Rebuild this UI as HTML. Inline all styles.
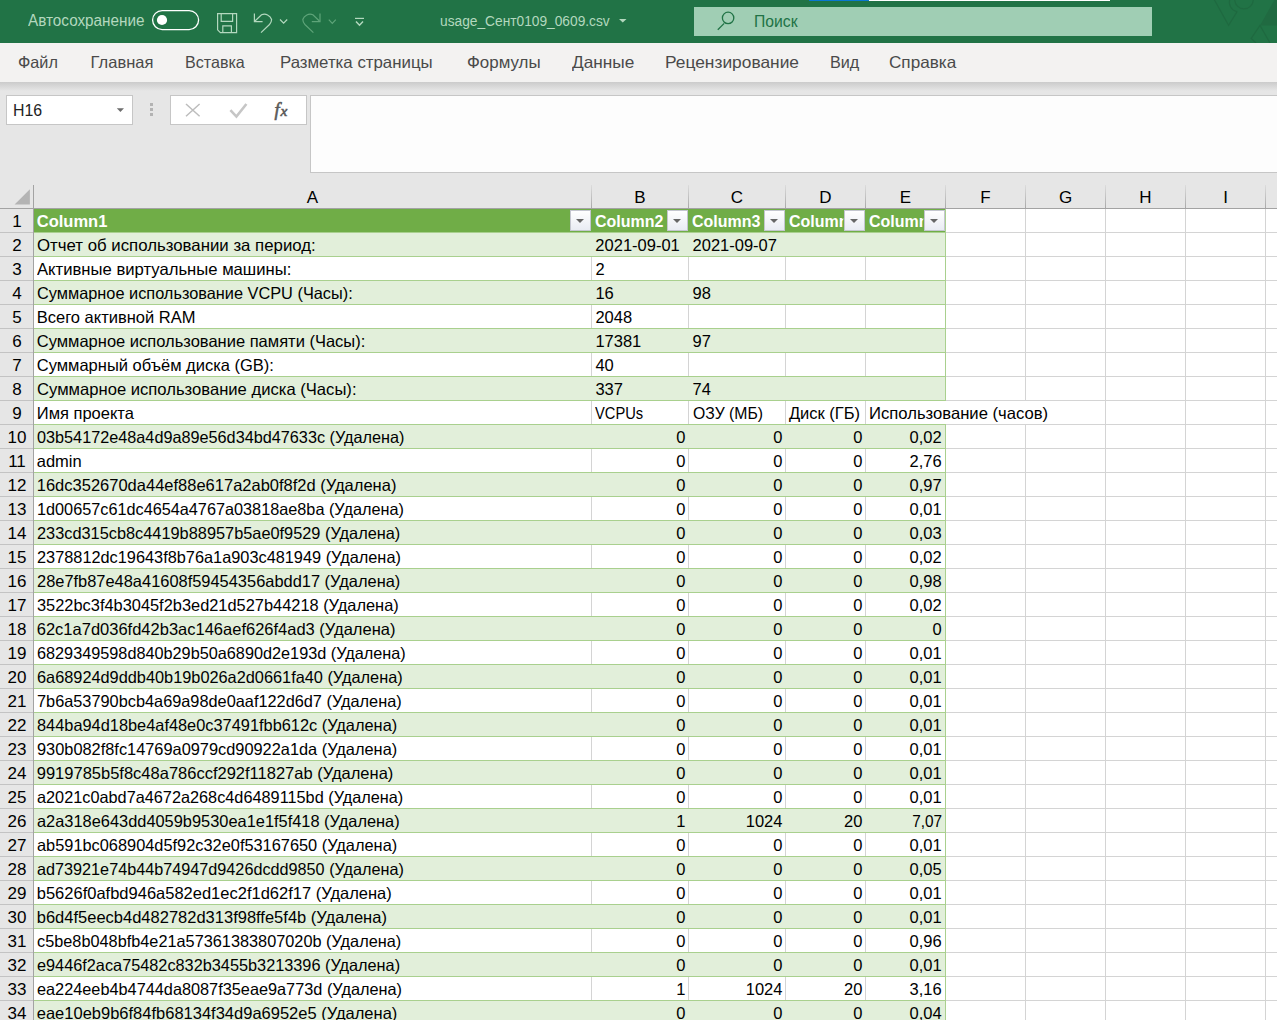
<!DOCTYPE html>
<html><head><meta charset="utf-8"><title>Excel</title>
<style>
html,body{margin:0;padding:0;width:1277px;height:1020px;overflow:hidden;background:#fff;font-family:'Liberation Sans',sans-serif;}
#root{position:relative;width:1277px;height:1020px;overflow:hidden;}
#root div{position:absolute;}
#root svg{position:absolute;}
.t{white-space:pre;line-height:1;}
.btn{top:210px;width:19px;height:19px;border:1px solid #c4c6cf;background:linear-gradient(#ffffff,#e9ecf3);}
.btn i{position:absolute;left:5px;top:8px;width:0;height:0;border-left:4px solid transparent;border-right:4px solid transparent;border-top:4px solid #666;}
</style></head>
<body><div id="root">
<!-- title bar -->
<div style="left:0;top:0;width:1277px;height:43px;background:#217346"></div>
<div style="left:809px;top:0;width:60px;height:1px;background:#0a78d2"></div>
<div style="left:869px;top:0;width:241px;height:1px;background:#ffffff"></div>
<svg style="left:1180px;top:0" width="97" height="43" viewBox="1180 0 97 43">
 <g fill="none" stroke="#1f6940" stroke-width="1.2" opacity="0.9">
  <polyline points="1213.9,-1 1228.6,25.4 1237.1,11.6"/>
  <path d="M1237.1,11.6 A9.5,9.5 0 0 1 1230,-1"/>
  <circle cx="1244" cy="-0.5" r="9.3"/>
  <polyline points="1255.9,43 1251.2,38.5 1260,25.4 1270,43"/>
 </g>
 <polygon points="1260,25.4 1275,-1 1278,-1 1278,25.4" fill="#206a41"/>
</svg>
<svg style="left:0;top:0" width="400" height="43" viewBox="0 0 400 43">
 <rect x="152.6" y="10.6" width="46" height="19" rx="9.5" ry="9.5" fill="none" stroke="#ffffff" stroke-width="1.3"/>
 <circle cx="162" cy="20" r="5.1" fill="#ffffff"/>
 <g fill="none" stroke="#b3d8be" stroke-width="1.2">
  <path d="M217.6,13.6 H236.6 V32.6 H220.4 L217.6,29.8 Z"/>
  <path d="M221.2,13.6 V21.4 H232.6 V13.6"/>
  <path d="M222.8,32.6 V25.8 H231.4 V32.6"/>
  <path d="M254.4,13.5 V21.6 H262.6"/>
  <path d="M255,21 L261.5,14.8 A7.6,7.6 0 0 1 271.6,19.5 A7.6,7.6 0 0 1 269.5,24.5 L261,32.6"/>
  <path d="M280,19.5 L283.6,23.2 L287.2,19.5"/>
  <path d="M355,18.4 H364"/>
  <path d="M356,21.5 L359.5,25.2 L363,21.5" stroke-width="1.5"/>
 </g>
 <g fill="none" stroke="#5ea479" stroke-width="1.2">
  <path d="M320,13.5 V21.6 H311.8"/>
  <path d="M319.4,21 L312.9,14.8 A7.6,7.6 0 0 0 302.8,19.5 A7.6,7.6 0 0 0 304.9,24.5 L313.4,32.6"/>
  <path d="M328.8,19.6 L332.3,23.3 L335.8,19.6"/>
 </g>
</svg>
<svg style="left:600px;top:0" width="40" height="43" viewBox="600 0 40 43">
 <polygon points="619,19 626.5,19 622.75,22.6" fill="#b3d8be"/>
</svg>
<div style="left:694px;top:7px;width:458px;height:29px;background:#a0ceb4"></div>
<svg style="left:710px;top:5px" width="30" height="30" viewBox="710 5 30 30">
 <g fill="none" stroke="#217346" stroke-width="1.3"><circle cx="728.1" cy="17.9" r="5.7"/><path d="M717.8,29.8 L724.2,23.4"/></g>
</svg>
<!-- ribbon tabs -->
<div style="left:0;top:43px;width:1277px;height:39px;background:#f3f2f1"></div>
<!-- formula area -->
<div style="left:0;top:82px;width:1277px;height:126px;background:#e6e6e6"></div>
<div style="left:0;top:82px;width:1277px;height:9px;background:linear-gradient(#cbcbcb,#e6e6e6)"></div>
<div style="left:6px;top:95px;width:125px;height:28px;border:1px solid #c6c6c6;background:#fff"></div>
<svg style="left:110px;top:100px" width="20" height="20" viewBox="110 100 20 20"><polygon points="116.8,108.2 124,108.2 120.4,112" fill="#6d6d6d"/></svg>
<div style="left:150px;top:103px;width:3px;height:3px;background:#b3b3b3"></div>
<div style="left:150px;top:108px;width:3px;height:3px;background:#b3b3b3"></div>
<div style="left:150px;top:113px;width:3px;height:3px;background:#b3b3b3"></div>
<div style="left:170px;top:95px;width:135px;height:28px;border:1px solid #c6c6c6;background:#fff"></div>
<svg style="left:170px;top:95px" width="137" height="30" viewBox="170 95 137 30">
 <g stroke="#bdbdbd" stroke-width="1.5" fill="none"><path d="M186,104 L199.6,116.2 M199.6,104 L186,116.2"/></g>
 <path d="M230.4,110.2 L236.4,116.6 L246.4,104" stroke="#c6c6c6" stroke-width="2.6" fill="none"/>
 <text x="274.5" y="115.8" font-family="Liberation Serif" font-style="italic" font-size="18.5" fill="#5a5a5a" stroke="#5a5a5a" stroke-width="0.6">f</text>
 <text x="280.5" y="115.8" font-family="Liberation Serif" font-style="italic" font-size="15.5" fill="#5a5a5a" stroke="#5a5a5a" stroke-width="0.6">x</text>
</svg>
<div style="left:310px;top:95px;width:980px;height:76px;border:1px solid #c6c6c6;background:#fdfdfd"></div>
<!-- column header / row header -->
<div style="left:0;top:208px;width:33px;height:812px;background:#e6e6e6"></div>
<div style="left:0;top:208px;width:1277px;height:1px;background:#a3a3a3"></div>
<div style="left:33px;top:185px;width:1px;height:835px;background:#a3a3a3"></div>
<svg style="left:0;top:185px" width="33" height="23" viewBox="0 185 33 23"><polygon points="14.6,204.6 29.9,189.3 29.9,204.6" fill="#b4b4b4"/></svg>
<div style="left:0;top:232px;width:33px;height:1px;background:#c3c3c3"></div>
<div style="left:0;top:256px;width:33px;height:1px;background:#c3c3c3"></div>
<div style="left:0;top:280px;width:33px;height:1px;background:#c3c3c3"></div>
<div style="left:0;top:304px;width:33px;height:1px;background:#c3c3c3"></div>
<div style="left:0;top:328px;width:33px;height:1px;background:#c3c3c3"></div>
<div style="left:0;top:352px;width:33px;height:1px;background:#c3c3c3"></div>
<div style="left:0;top:376px;width:33px;height:1px;background:#c3c3c3"></div>
<div style="left:0;top:400px;width:33px;height:1px;background:#c3c3c3"></div>
<div style="left:0;top:424px;width:33px;height:1px;background:#c3c3c3"></div>
<div style="left:0;top:448px;width:33px;height:1px;background:#c3c3c3"></div>
<div style="left:0;top:472px;width:33px;height:1px;background:#c3c3c3"></div>
<div style="left:0;top:496px;width:33px;height:1px;background:#c3c3c3"></div>
<div style="left:0;top:520px;width:33px;height:1px;background:#c3c3c3"></div>
<div style="left:0;top:544px;width:33px;height:1px;background:#c3c3c3"></div>
<div style="left:0;top:568px;width:33px;height:1px;background:#c3c3c3"></div>
<div style="left:0;top:592px;width:33px;height:1px;background:#c3c3c3"></div>
<div style="left:0;top:616px;width:33px;height:1px;background:#c3c3c3"></div>
<div style="left:0;top:640px;width:33px;height:1px;background:#c3c3c3"></div>
<div style="left:0;top:664px;width:33px;height:1px;background:#c3c3c3"></div>
<div style="left:0;top:688px;width:33px;height:1px;background:#c3c3c3"></div>
<div style="left:0;top:712px;width:33px;height:1px;background:#c3c3c3"></div>
<div style="left:0;top:736px;width:33px;height:1px;background:#c3c3c3"></div>
<div style="left:0;top:760px;width:33px;height:1px;background:#c3c3c3"></div>
<div style="left:0;top:784px;width:33px;height:1px;background:#c3c3c3"></div>
<div style="left:0;top:808px;width:33px;height:1px;background:#c3c3c3"></div>
<div style="left:0;top:832px;width:33px;height:1px;background:#c3c3c3"></div>
<div style="left:0;top:856px;width:33px;height:1px;background:#c3c3c3"></div>
<div style="left:0;top:880px;width:33px;height:1px;background:#c3c3c3"></div>
<div style="left:0;top:904px;width:33px;height:1px;background:#c3c3c3"></div>
<div style="left:0;top:928px;width:33px;height:1px;background:#c3c3c3"></div>
<div style="left:0;top:952px;width:33px;height:1px;background:#c3c3c3"></div>
<div style="left:0;top:976px;width:33px;height:1px;background:#c3c3c3"></div>
<div style="left:0;top:1000px;width:33px;height:1px;background:#c3c3c3"></div>
<div style="left:0;top:1024px;width:33px;height:1px;background:#c3c3c3"></div>
<div style="left:591px;top:185px;width:1px;height:23px;background:linear-gradient(#dcdcdc,#a9a9a9)"></div>
<div style="left:688px;top:185px;width:1px;height:23px;background:linear-gradient(#dcdcdc,#a9a9a9)"></div>
<div style="left:785px;top:185px;width:1px;height:23px;background:linear-gradient(#dcdcdc,#a9a9a9)"></div>
<div style="left:865px;top:185px;width:1px;height:23px;background:linear-gradient(#dcdcdc,#a9a9a9)"></div>
<div style="left:945px;top:185px;width:1px;height:23px;background:linear-gradient(#dcdcdc,#a9a9a9)"></div>
<div style="left:1025px;top:185px;width:1px;height:23px;background:linear-gradient(#dcdcdc,#a9a9a9)"></div>
<div style="left:1105px;top:185px;width:1px;height:23px;background:linear-gradient(#dcdcdc,#a9a9a9)"></div>
<div style="left:1185px;top:185px;width:1px;height:23px;background:linear-gradient(#dcdcdc,#a9a9a9)"></div>
<div style="left:1265px;top:185px;width:1px;height:23px;background:linear-gradient(#dcdcdc,#a9a9a9)"></div>
<!-- grid -->
<div style="left:591px;top:209px;width:1px;height:811px;background:#d4d4d4;"></div>
<div style="left:688px;top:209px;width:1px;height:811px;background:#d4d4d4;"></div>
<div style="left:785px;top:209px;width:1px;height:811px;background:#d4d4d4;"></div>
<div style="left:865px;top:209px;width:1px;height:811px;background:#d4d4d4;"></div>
<div style="left:945px;top:209px;width:1px;height:811px;background:#d4d4d4;"></div>
<div style="left:1025px;top:209px;width:1px;height:811px;background:#d4d4d4;"></div>
<div style="left:1105px;top:209px;width:1px;height:811px;background:#d4d4d4;"></div>
<div style="left:1185px;top:209px;width:1px;height:811px;background:#d4d4d4;"></div>
<div style="left:1265px;top:209px;width:1px;height:811px;background:#d4d4d4;"></div>
<div style="left:34px;top:232px;width:1243px;height:1px;background:#d4d4d4;"></div>
<div style="left:34px;top:256px;width:1243px;height:1px;background:#d4d4d4;"></div>
<div style="left:34px;top:280px;width:1243px;height:1px;background:#d4d4d4;"></div>
<div style="left:34px;top:304px;width:1243px;height:1px;background:#d4d4d4;"></div>
<div style="left:34px;top:328px;width:1243px;height:1px;background:#d4d4d4;"></div>
<div style="left:34px;top:352px;width:1243px;height:1px;background:#d4d4d4;"></div>
<div style="left:34px;top:376px;width:1243px;height:1px;background:#d4d4d4;"></div>
<div style="left:34px;top:400px;width:1243px;height:1px;background:#d4d4d4;"></div>
<div style="left:34px;top:424px;width:1243px;height:1px;background:#d4d4d4;"></div>
<div style="left:34px;top:448px;width:1243px;height:1px;background:#d4d4d4;"></div>
<div style="left:34px;top:472px;width:1243px;height:1px;background:#d4d4d4;"></div>
<div style="left:34px;top:496px;width:1243px;height:1px;background:#d4d4d4;"></div>
<div style="left:34px;top:520px;width:1243px;height:1px;background:#d4d4d4;"></div>
<div style="left:34px;top:544px;width:1243px;height:1px;background:#d4d4d4;"></div>
<div style="left:34px;top:568px;width:1243px;height:1px;background:#d4d4d4;"></div>
<div style="left:34px;top:592px;width:1243px;height:1px;background:#d4d4d4;"></div>
<div style="left:34px;top:616px;width:1243px;height:1px;background:#d4d4d4;"></div>
<div style="left:34px;top:640px;width:1243px;height:1px;background:#d4d4d4;"></div>
<div style="left:34px;top:664px;width:1243px;height:1px;background:#d4d4d4;"></div>
<div style="left:34px;top:688px;width:1243px;height:1px;background:#d4d4d4;"></div>
<div style="left:34px;top:712px;width:1243px;height:1px;background:#d4d4d4;"></div>
<div style="left:34px;top:736px;width:1243px;height:1px;background:#d4d4d4;"></div>
<div style="left:34px;top:760px;width:1243px;height:1px;background:#d4d4d4;"></div>
<div style="left:34px;top:784px;width:1243px;height:1px;background:#d4d4d4;"></div>
<div style="left:34px;top:808px;width:1243px;height:1px;background:#d4d4d4;"></div>
<div style="left:34px;top:832px;width:1243px;height:1px;background:#d4d4d4;"></div>
<div style="left:34px;top:856px;width:1243px;height:1px;background:#d4d4d4;"></div>
<div style="left:34px;top:880px;width:1243px;height:1px;background:#d4d4d4;"></div>
<div style="left:34px;top:904px;width:1243px;height:1px;background:#d4d4d4;"></div>
<div style="left:34px;top:928px;width:1243px;height:1px;background:#d4d4d4;"></div>
<div style="left:34px;top:952px;width:1243px;height:1px;background:#d4d4d4;"></div>
<div style="left:34px;top:976px;width:1243px;height:1px;background:#d4d4d4;"></div>
<div style="left:34px;top:1000px;width:1243px;height:1px;background:#d4d4d4;"></div>
<div style="left:34px;top:1024px;width:1243px;height:1px;background:#d4d4d4;"></div>
<div style="left:34px;top:233px;width:911px;height:23px;background:#e2efda;"></div>
<div style="left:34px;top:256px;width:911px;height:1px;background:#a9d08e;"></div>
<div style="left:34px;top:280px;width:911px;height:1px;background:#a9d08e;"></div>
<div style="left:34px;top:281px;width:911px;height:23px;background:#e2efda;"></div>
<div style="left:34px;top:304px;width:911px;height:1px;background:#a9d08e;"></div>
<div style="left:34px;top:328px;width:911px;height:1px;background:#a9d08e;"></div>
<div style="left:34px;top:329px;width:911px;height:23px;background:#e2efda;"></div>
<div style="left:34px;top:352px;width:911px;height:1px;background:#a9d08e;"></div>
<div style="left:34px;top:376px;width:911px;height:1px;background:#a9d08e;"></div>
<div style="left:34px;top:377px;width:911px;height:23px;background:#e2efda;"></div>
<div style="left:34px;top:400px;width:911px;height:1px;background:#a9d08e;"></div>
<div style="left:34px;top:424px;width:911px;height:1px;background:#a9d08e;"></div>
<div style="left:34px;top:425px;width:911px;height:23px;background:#e2efda;"></div>
<div style="left:34px;top:448px;width:911px;height:1px;background:#a9d08e;"></div>
<div style="left:34px;top:472px;width:911px;height:1px;background:#a9d08e;"></div>
<div style="left:34px;top:473px;width:911px;height:23px;background:#e2efda;"></div>
<div style="left:34px;top:496px;width:911px;height:1px;background:#a9d08e;"></div>
<div style="left:34px;top:520px;width:911px;height:1px;background:#a9d08e;"></div>
<div style="left:34px;top:521px;width:911px;height:23px;background:#e2efda;"></div>
<div style="left:34px;top:544px;width:911px;height:1px;background:#a9d08e;"></div>
<div style="left:34px;top:568px;width:911px;height:1px;background:#a9d08e;"></div>
<div style="left:34px;top:569px;width:911px;height:23px;background:#e2efda;"></div>
<div style="left:34px;top:592px;width:911px;height:1px;background:#a9d08e;"></div>
<div style="left:34px;top:616px;width:911px;height:1px;background:#a9d08e;"></div>
<div style="left:34px;top:617px;width:911px;height:23px;background:#e2efda;"></div>
<div style="left:34px;top:640px;width:911px;height:1px;background:#a9d08e;"></div>
<div style="left:34px;top:664px;width:911px;height:1px;background:#a9d08e;"></div>
<div style="left:34px;top:665px;width:911px;height:23px;background:#e2efda;"></div>
<div style="left:34px;top:688px;width:911px;height:1px;background:#a9d08e;"></div>
<div style="left:34px;top:712px;width:911px;height:1px;background:#a9d08e;"></div>
<div style="left:34px;top:713px;width:911px;height:23px;background:#e2efda;"></div>
<div style="left:34px;top:736px;width:911px;height:1px;background:#a9d08e;"></div>
<div style="left:34px;top:760px;width:911px;height:1px;background:#a9d08e;"></div>
<div style="left:34px;top:761px;width:911px;height:23px;background:#e2efda;"></div>
<div style="left:34px;top:784px;width:911px;height:1px;background:#a9d08e;"></div>
<div style="left:34px;top:808px;width:911px;height:1px;background:#a9d08e;"></div>
<div style="left:34px;top:809px;width:911px;height:23px;background:#e2efda;"></div>
<div style="left:34px;top:832px;width:911px;height:1px;background:#a9d08e;"></div>
<div style="left:34px;top:856px;width:911px;height:1px;background:#a9d08e;"></div>
<div style="left:34px;top:857px;width:911px;height:23px;background:#e2efda;"></div>
<div style="left:34px;top:880px;width:911px;height:1px;background:#a9d08e;"></div>
<div style="left:34px;top:904px;width:911px;height:1px;background:#a9d08e;"></div>
<div style="left:34px;top:905px;width:911px;height:23px;background:#e2efda;"></div>
<div style="left:34px;top:928px;width:911px;height:1px;background:#a9d08e;"></div>
<div style="left:34px;top:952px;width:911px;height:1px;background:#a9d08e;"></div>
<div style="left:34px;top:953px;width:911px;height:23px;background:#e2efda;"></div>
<div style="left:34px;top:976px;width:911px;height:1px;background:#a9d08e;"></div>
<div style="left:34px;top:1000px;width:911px;height:1px;background:#a9d08e;"></div>
<div style="left:34px;top:1001px;width:911px;height:23px;background:#e2efda;"></div>
<div style="left:34px;top:1024px;width:911px;height:1px;background:#a9d08e;"></div>
<div style="left:34px;top:209px;width:911px;height:23px;background:#70ad47;"></div>
<div style="left:34px;top:232px;width:911px;height:1px;background:#a9d08e;"></div>
<div style="left:945px;top:209px;width:1px;height:811px;background:#a9d08e;"></div>
<div style="left:945px;top:401px;width:1px;height:23px;background:#ffffff;"></div>
<div style="left:1025px;top:401px;width:1px;height:23px;background:#ffffff;"></div>
<div class="btn" style="left:570px"><i></i></div>
<div class="btn" style="left:667px"><i></i></div>
<div class="btn" style="left:764px"><i></i></div>
<div class="btn" style="left:844px"><i></i></div>
<div class="btn" style="left:924px"><i></i></div>
<div class="t" style="top:13.40px;font-size:16px;color:#b3d8be;left:28.44px;transform:scaleX(0.9554);transform-origin:left;">Автосохранение</div>
<div class="t" style="top:12.83px;font-size:15.5px;color:#b3d8be;left:440.01px;transform:scaleX(0.8863);transform-origin:left;">usage_Сент0109_0609.csv</div>
<div class="t" style="top:13.70px;font-size:16px;color:#217346;left:753.91px;transform:scaleX(0.9823);transform-origin:left;">Поиск</div>
<div class="t" style="top:53.98px;font-size:16.5px;color:#4a4a4a;left:18.19px;transform:scaleX(0.9832);transform-origin:left;">Файл</div>
<div class="t" style="top:53.98px;font-size:16.5px;color:#4a4a4a;left:90.57px;">Главная</div>
<div class="t" style="top:53.98px;font-size:16.5px;color:#4a4a4a;left:184.70px;transform:scaleX(0.9749);transform-origin:left;">Вставка</div>
<div class="t" style="top:53.98px;font-size:16.5px;color:#4a4a4a;left:279.86px;transform:scaleX(1.0198);transform-origin:left;">Разметка страницы</div>
<div class="t" style="top:53.98px;font-size:16.5px;color:#4a4a4a;left:466.85px;transform:scaleX(1.0256);transform-origin:left;">Формулы</div>
<div class="t" style="top:53.98px;font-size:16.5px;color:#4a4a4a;left:572.14px;transform:scaleX(1.0462);transform-origin:left;">Данные</div>
<div class="t" style="top:53.98px;font-size:16.5px;color:#4a4a4a;left:665.13px;transform:scaleX(1.0515);transform-origin:left;">Рецензирование</div>
<div class="t" style="top:53.98px;font-size:16.5px;color:#4a4a4a;left:829.69px;transform:scaleX(0.9811);transform-origin:left;">Вид</div>
<div class="t" style="top:53.98px;font-size:16.5px;color:#4a4a4a;left:888.54px;transform:scaleX(1.0376);transform-origin:left;">Справка</div>
<div class="t" style="top:103.40px;font-size:16px;color:#222;left:12.71px;transform:scaleX(0.9936);transform-origin:left;">H16</div>
<div class="t" style="top:188.55px;font-size:17px;color:#000;left:306.83px;">A</div>
<div class="t" style="top:188.55px;font-size:17px;color:#000;left:634.33px;">B</div>
<div class="t" style="top:188.55px;font-size:17px;color:#000;left:730.86px;">C</div>
<div class="t" style="top:188.55px;font-size:17px;color:#000;left:819.36px;">D</div>
<div class="t" style="top:188.55px;font-size:17px;color:#000;left:899.83px;">E</div>
<div class="t" style="top:188.55px;font-size:17px;color:#000;left:980.30px;">F</div>
<div class="t" style="top:188.55px;font-size:17px;color:#000;left:1058.88px;">G</div>
<div class="t" style="top:188.55px;font-size:17px;color:#000;left:1139.36px;">H</div>
<div class="t" style="top:188.55px;font-size:17px;color:#000;left:1223.13px;">I</div>
<div class="t" style="top:188.55px;font-size:17px;color:#000;left:1301.25px;">J</div>
<div class="t" style="top:212.55px;font-size:17px;color:#000;left:12.27px;">1</div>
<div class="t" style="top:236.55px;font-size:17px;color:#000;left:12.27px;">2</div>
<div class="t" style="top:260.55px;font-size:17px;color:#000;left:12.27px;">3</div>
<div class="t" style="top:284.55px;font-size:17px;color:#000;left:12.27px;">4</div>
<div class="t" style="top:308.55px;font-size:17px;color:#000;left:12.27px;">5</div>
<div class="t" style="top:332.55px;font-size:17px;color:#000;left:12.27px;">6</div>
<div class="t" style="top:356.55px;font-size:17px;color:#000;left:12.27px;">7</div>
<div class="t" style="top:380.55px;font-size:17px;color:#000;left:12.27px;">8</div>
<div class="t" style="top:404.55px;font-size:17px;color:#000;left:12.27px;">9</div>
<div class="t" style="top:428.55px;font-size:17px;color:#000;left:7.54px;">10</div>
<div class="t" style="top:452.55px;font-size:17px;color:#000;left:8.17px;">11</div>
<div class="t" style="top:476.55px;font-size:17px;color:#000;left:7.54px;">12</div>
<div class="t" style="top:500.55px;font-size:17px;color:#000;left:7.54px;">13</div>
<div class="t" style="top:524.55px;font-size:17px;color:#000;left:7.54px;">14</div>
<div class="t" style="top:548.55px;font-size:17px;color:#000;left:7.54px;">15</div>
<div class="t" style="top:572.55px;font-size:17px;color:#000;left:7.54px;">16</div>
<div class="t" style="top:596.55px;font-size:17px;color:#000;left:7.54px;">17</div>
<div class="t" style="top:620.55px;font-size:17px;color:#000;left:7.54px;">18</div>
<div class="t" style="top:644.55px;font-size:17px;color:#000;left:7.54px;">19</div>
<div class="t" style="top:668.55px;font-size:17px;color:#000;left:7.54px;">20</div>
<div class="t" style="top:692.55px;font-size:17px;color:#000;left:7.54px;">21</div>
<div class="t" style="top:716.55px;font-size:17px;color:#000;left:7.54px;">22</div>
<div class="t" style="top:740.55px;font-size:17px;color:#000;left:7.54px;">23</div>
<div class="t" style="top:764.55px;font-size:17px;color:#000;left:7.54px;">24</div>
<div class="t" style="top:788.55px;font-size:17px;color:#000;left:7.54px;">25</div>
<div class="t" style="top:812.55px;font-size:17px;color:#000;left:7.54px;">26</div>
<div class="t" style="top:836.55px;font-size:17px;color:#000;left:7.54px;">27</div>
<div class="t" style="top:860.55px;font-size:17px;color:#000;left:7.54px;">28</div>
<div class="t" style="top:884.55px;font-size:17px;color:#000;left:7.54px;">29</div>
<div class="t" style="top:908.55px;font-size:17px;color:#000;left:7.54px;">30</div>
<div class="t" style="top:932.55px;font-size:17px;color:#000;left:7.54px;">31</div>
<div class="t" style="top:956.55px;font-size:17px;color:#000;left:7.54px;">32</div>
<div class="t" style="top:980.55px;font-size:17px;color:#000;left:7.54px;">33</div>
<div class="t" style="top:1004.55px;font-size:17px;color:#000;left:7.54px;">34</div>
<div class="t" style="top:212.97px;font-size:16.5px;color:#ffffff;font-weight:bold;left:36.77px;">Column1</div>
<div class="t" style="top:212.97px;font-size:16.5px;color:#ffffff;font-weight:bold;left:594.60px;transform:scaleX(0.9701);transform-origin:left;">Column2</div>
<div class="t" style="top:212.97px;font-size:16.5px;color:#ffffff;font-weight:bold;left:691.80px;transform:scaleX(0.9701);transform-origin:left;">Column3</div>
<div class="t" style="top:212.97px;font-size:16.5px;color:#ffffff;font-weight:bold;left:788.70px;transform:scaleX(0.9701);transform-origin:left;"><div style="width:56.2px;overflow:hidden">Column4</div></div>
<div class="t" style="top:212.97px;font-size:16.5px;color:#ffffff;font-weight:bold;left:868.70px;transform:scaleX(0.9701);transform-origin:left;"><div style="width:56.2px;overflow:hidden">Column5</div></div>
<div class="t" style="top:236.97px;font-size:16.5px;color:#000;left:36.76px;transform:scaleX(1.0184);transform-origin:left;">Отчет об использовании за период:</div>
<div class="t" style="top:260.98px;font-size:16.5px;color:#000;left:36.77px;transform:scaleX(1.0094);transform-origin:left;">Активные виртуальные машины:</div>
<div class="t" style="top:284.98px;font-size:16.5px;color:#000;left:36.78px;transform:scaleX(0.9890);transform-origin:left;">Суммарное использование VCPU (Часы):</div>
<div class="t" style="top:308.98px;font-size:16.5px;color:#000;left:36.78px;">Всего активной RAM</div>
<div class="t" style="top:332.98px;font-size:16.5px;color:#000;left:36.77px;">Суммарное использование памяти (Часы):</div>
<div class="t" style="top:356.98px;font-size:16.5px;color:#000;left:36.78px;">Суммарный объём диска (GB):</div>
<div class="t" style="top:380.98px;font-size:16.5px;color:#000;left:36.77px;transform:scaleX(1.0073);transform-origin:left;">Суммарное использование диска (Часы):</div>
<div class="t" style="top:404.98px;font-size:16.5px;color:#000;left:36.77px;">Имя проекта</div>
<div class="t" style="top:236.97px;font-size:16.5px;color:#000;left:595.37px;">2021-09-01</div>
<div class="t" style="top:236.97px;font-size:16.5px;color:#000;left:692.57px;">2021-09-07</div>
<div class="t" style="top:260.98px;font-size:16.5px;color:#000;left:595.38px;">2</div>
<div class="t" style="top:284.98px;font-size:16.5px;color:#000;left:595.38px;">16</div>
<div class="t" style="top:284.98px;font-size:16.5px;color:#000;left:692.57px;">98</div>
<div class="t" style="top:308.98px;font-size:16.5px;color:#000;left:595.38px;">2048</div>
<div class="t" style="top:332.98px;font-size:16.5px;color:#000;left:595.38px;">17381</div>
<div class="t" style="top:332.98px;font-size:16.5px;color:#000;left:692.57px;">97</div>
<div class="t" style="top:356.98px;font-size:16.5px;color:#000;left:595.38px;">40</div>
<div class="t" style="top:380.98px;font-size:16.5px;color:#000;left:595.38px;">337</div>
<div class="t" style="top:380.98px;font-size:16.5px;color:#000;left:692.57px;">74</div>
<div class="t" style="top:404.98px;font-size:16.5px;color:#000;left:595.47px;transform:scaleX(0.8906);transform-origin:left;">VCPUs</div>
<div class="t" style="top:404.98px;font-size:16.5px;color:#000;left:692.71px;transform:scaleX(0.9565);transform-origin:left;">ОЗУ (МБ)</div>
<div class="t" style="top:404.98px;font-size:16.5px;color:#000;left:788.88px;">Диск (ГБ)</div>
<div class="t" style="top:404.98px;font-size:16.5px;color:#000;left:869.37px;transform:scaleX(1.0085);transform-origin:left;">Использование (часов)</div>
<div class="t" style="top:428.98px;font-size:16.5px;color:#000;left:36.79px;transform:scaleX(0.9840);transform-origin:left;">03b54172e48a4d9a89e56d34bd47633c (Удалена)</div>
<div class="t" style="top:428.98px;font-size:16.5px;color:#000;left:676.14px;">0</div>
<div class="t" style="top:428.98px;font-size:16.5px;color:#000;left:773.24px;">0</div>
<div class="t" style="top:428.98px;font-size:16.5px;color:#000;left:853.24px;">0</div>
<div class="t" style="top:428.98px;font-size:16.5px;color:#000;left:909.60px;">0,02</div>
<div class="t" style="top:452.98px;font-size:16.5px;color:#000;left:36.77px;">admin</div>
<div class="t" style="top:452.98px;font-size:16.5px;color:#000;left:676.14px;">0</div>
<div class="t" style="top:452.98px;font-size:16.5px;color:#000;left:773.24px;">0</div>
<div class="t" style="top:452.98px;font-size:16.5px;color:#000;left:853.24px;">0</div>
<div class="t" style="top:452.98px;font-size:16.5px;color:#000;left:909.60px;">2,76</div>
<div class="t" style="top:476.98px;font-size:16.5px;color:#000;left:36.78px;">16dc352670da44ef88e617a2ab0f8f2d (Удалена)</div>
<div class="t" style="top:476.98px;font-size:16.5px;color:#000;left:676.14px;">0</div>
<div class="t" style="top:476.98px;font-size:16.5px;color:#000;left:773.24px;">0</div>
<div class="t" style="top:476.98px;font-size:16.5px;color:#000;left:853.24px;">0</div>
<div class="t" style="top:476.98px;font-size:16.5px;color:#000;left:909.60px;">0,97</div>
<div class="t" style="top:500.98px;font-size:16.5px;color:#000;left:36.79px;transform:scaleX(0.9850);transform-origin:left;">1d00657c61dc4654a4767a03818ae8ba (Удалена)</div>
<div class="t" style="top:500.98px;font-size:16.5px;color:#000;left:676.14px;">0</div>
<div class="t" style="top:500.98px;font-size:16.5px;color:#000;left:773.24px;">0</div>
<div class="t" style="top:500.98px;font-size:16.5px;color:#000;left:853.24px;">0</div>
<div class="t" style="top:500.98px;font-size:16.5px;color:#000;left:909.60px;">0,01</div>
<div class="t" style="top:524.98px;font-size:16.5px;color:#000;left:36.78px;transform:scaleX(0.9901);transform-origin:left;">233cd315cb8c4419b88957b5ae0f9529 (Удалена)</div>
<div class="t" style="top:524.98px;font-size:16.5px;color:#000;left:676.14px;">0</div>
<div class="t" style="top:524.98px;font-size:16.5px;color:#000;left:773.24px;">0</div>
<div class="t" style="top:524.98px;font-size:16.5px;color:#000;left:853.24px;">0</div>
<div class="t" style="top:524.98px;font-size:16.5px;color:#000;left:909.60px;">0,03</div>
<div class="t" style="top:548.98px;font-size:16.5px;color:#000;left:36.78px;transform:scaleX(0.9892);transform-origin:left;">2378812dc19643f8b76a1a903c481949 (Удалена)</div>
<div class="t" style="top:548.98px;font-size:16.5px;color:#000;left:676.14px;">0</div>
<div class="t" style="top:548.98px;font-size:16.5px;color:#000;left:773.24px;">0</div>
<div class="t" style="top:548.98px;font-size:16.5px;color:#000;left:853.24px;">0</div>
<div class="t" style="top:548.98px;font-size:16.5px;color:#000;left:909.60px;">0,02</div>
<div class="t" style="top:572.98px;font-size:16.5px;color:#000;left:36.78px;transform:scaleX(0.9950);transform-origin:left;">28e7fb87e48a41608f59454356abdd17 (Удалена)</div>
<div class="t" style="top:572.98px;font-size:16.5px;color:#000;left:676.14px;">0</div>
<div class="t" style="top:572.98px;font-size:16.5px;color:#000;left:773.24px;">0</div>
<div class="t" style="top:572.98px;font-size:16.5px;color:#000;left:853.24px;">0</div>
<div class="t" style="top:572.98px;font-size:16.5px;color:#000;left:909.60px;">0,98</div>
<div class="t" style="top:596.98px;font-size:16.5px;color:#000;left:36.78px;transform:scaleX(0.9932);transform-origin:left;">3522bc3f4b3045f2b3ed21d527b44218 (Удалена)</div>
<div class="t" style="top:596.98px;font-size:16.5px;color:#000;left:676.14px;">0</div>
<div class="t" style="top:596.98px;font-size:16.5px;color:#000;left:773.24px;">0</div>
<div class="t" style="top:596.98px;font-size:16.5px;color:#000;left:853.24px;">0</div>
<div class="t" style="top:596.98px;font-size:16.5px;color:#000;left:909.60px;">0,02</div>
<div class="t" style="top:620.98px;font-size:16.5px;color:#000;left:36.78px;">62c1a7d036fd42b3ac146aef626f4ad3 (Удалена)</div>
<div class="t" style="top:620.98px;font-size:16.5px;color:#000;left:676.14px;">0</div>
<div class="t" style="top:620.98px;font-size:16.5px;color:#000;left:773.24px;">0</div>
<div class="t" style="top:620.98px;font-size:16.5px;color:#000;left:853.24px;">0</div>
<div class="t" style="top:620.98px;font-size:16.5px;color:#000;left:932.54px;">0</div>
<div class="t" style="top:644.98px;font-size:16.5px;color:#000;left:36.79px;transform:scaleX(0.9850);transform-origin:left;">6829349598d840b29b50a6890d2e193d (Удалена)</div>
<div class="t" style="top:644.98px;font-size:16.5px;color:#000;left:676.14px;">0</div>
<div class="t" style="top:644.98px;font-size:16.5px;color:#000;left:773.24px;">0</div>
<div class="t" style="top:644.98px;font-size:16.5px;color:#000;left:853.24px;">0</div>
<div class="t" style="top:644.98px;font-size:16.5px;color:#000;left:909.60px;">0,01</div>
<div class="t" style="top:668.98px;font-size:16.5px;color:#000;left:36.78px;transform:scaleX(0.9891);transform-origin:left;">6a68924d9ddb40b19b026a2d0661fa40 (Удалена)</div>
<div class="t" style="top:668.98px;font-size:16.5px;color:#000;left:676.14px;">0</div>
<div class="t" style="top:668.98px;font-size:16.5px;color:#000;left:773.24px;">0</div>
<div class="t" style="top:668.98px;font-size:16.5px;color:#000;left:853.24px;">0</div>
<div class="t" style="top:668.98px;font-size:16.5px;color:#000;left:909.60px;">0,01</div>
<div class="t" style="top:692.98px;font-size:16.5px;color:#000;left:36.78px;transform:scaleX(0.9889);transform-origin:left;">7b6a53790bcb4a69a98de0aaf122d6d7 (Удалена)</div>
<div class="t" style="top:692.98px;font-size:16.5px;color:#000;left:676.14px;">0</div>
<div class="t" style="top:692.98px;font-size:16.5px;color:#000;left:773.24px;">0</div>
<div class="t" style="top:692.98px;font-size:16.5px;color:#000;left:853.24px;">0</div>
<div class="t" style="top:692.98px;font-size:16.5px;color:#000;left:909.60px;">0,01</div>
<div class="t" style="top:716.98px;font-size:16.5px;color:#000;left:36.78px;transform:scaleX(0.9915);transform-origin:left;">844ba94d18be4af48e0c37491fbb612c (Удалена)</div>
<div class="t" style="top:716.98px;font-size:16.5px;color:#000;left:676.14px;">0</div>
<div class="t" style="top:716.98px;font-size:16.5px;color:#000;left:773.24px;">0</div>
<div class="t" style="top:716.98px;font-size:16.5px;color:#000;left:853.24px;">0</div>
<div class="t" style="top:716.98px;font-size:16.5px;color:#000;left:909.60px;">0,01</div>
<div class="t" style="top:740.98px;font-size:16.5px;color:#000;left:36.78px;transform:scaleX(0.9915);transform-origin:left;">930b082f8fc14769a0979cd90922a1da (Удалена)</div>
<div class="t" style="top:740.98px;font-size:16.5px;color:#000;left:676.14px;">0</div>
<div class="t" style="top:740.98px;font-size:16.5px;color:#000;left:773.24px;">0</div>
<div class="t" style="top:740.98px;font-size:16.5px;color:#000;left:853.24px;">0</div>
<div class="t" style="top:740.98px;font-size:16.5px;color:#000;left:909.60px;">0,01</div>
<div class="t" style="top:764.98px;font-size:16.5px;color:#000;left:36.77px;">9919785b5f8c48a786ccf292f11827ab (Удалена)</div>
<div class="t" style="top:764.98px;font-size:16.5px;color:#000;left:676.14px;">0</div>
<div class="t" style="top:764.98px;font-size:16.5px;color:#000;left:773.24px;">0</div>
<div class="t" style="top:764.98px;font-size:16.5px;color:#000;left:853.24px;">0</div>
<div class="t" style="top:764.98px;font-size:16.5px;color:#000;left:909.60px;">0,01</div>
<div class="t" style="top:788.98px;font-size:16.5px;color:#000;left:36.79px;transform:scaleX(0.9867);transform-origin:left;">a2021c0abd7a4672a268c4d6489115bd (Удалена)</div>
<div class="t" style="top:788.98px;font-size:16.5px;color:#000;left:676.14px;">0</div>
<div class="t" style="top:788.98px;font-size:16.5px;color:#000;left:773.24px;">0</div>
<div class="t" style="top:788.98px;font-size:16.5px;color:#000;left:853.24px;">0</div>
<div class="t" style="top:788.98px;font-size:16.5px;color:#000;left:909.60px;">0,01</div>
<div class="t" style="top:812.98px;font-size:16.5px;color:#000;left:36.78px;transform:scaleX(0.9933);transform-origin:left;">a2a318e643dd4059b9530ea1e1f5f418 (Удалена)</div>
<div class="t" style="top:812.98px;font-size:16.5px;color:#000;left:676.14px;">1</div>
<div class="t" style="top:812.98px;font-size:16.5px;color:#000;left:745.71px;">1024</div>
<div class="t" style="top:812.98px;font-size:16.5px;color:#000;left:844.07px;">20</div>
<div class="t" style="top:812.98px;font-size:16.5px;color:#000;left:909.60px;transform:scaleX(0.9317);transform-origin:right;">7,07</div>
<div class="t" style="top:836.98px;font-size:16.5px;color:#000;left:36.78px;transform:scaleX(0.9915);transform-origin:left;">ab591bc068904d5f92c32e0f53167650 (Удалена)</div>
<div class="t" style="top:836.98px;font-size:16.5px;color:#000;left:676.14px;">0</div>
<div class="t" style="top:836.98px;font-size:16.5px;color:#000;left:773.24px;">0</div>
<div class="t" style="top:836.98px;font-size:16.5px;color:#000;left:853.24px;">0</div>
<div class="t" style="top:836.98px;font-size:16.5px;color:#000;left:909.60px;">0,01</div>
<div class="t" style="top:860.98px;font-size:16.5px;color:#000;left:36.79px;transform:scaleX(0.9826);transform-origin:left;">ad73921e74b44b74947d9426dcdd9850 (Удалена)</div>
<div class="t" style="top:860.98px;font-size:16.5px;color:#000;left:676.14px;">0</div>
<div class="t" style="top:860.98px;font-size:16.5px;color:#000;left:773.24px;">0</div>
<div class="t" style="top:860.98px;font-size:16.5px;color:#000;left:853.24px;">0</div>
<div class="t" style="top:860.98px;font-size:16.5px;color:#000;left:909.60px;">0,05</div>
<div class="t" style="top:884.98px;font-size:16.5px;color:#000;left:36.78px;">b5626f0afbd946a582ed1ec2f1d62f17 (Удалена)</div>
<div class="t" style="top:884.98px;font-size:16.5px;color:#000;left:676.14px;">0</div>
<div class="t" style="top:884.98px;font-size:16.5px;color:#000;left:773.24px;">0</div>
<div class="t" style="top:884.98px;font-size:16.5px;color:#000;left:853.24px;">0</div>
<div class="t" style="top:884.98px;font-size:16.5px;color:#000;left:909.60px;">0,01</div>
<div class="t" style="top:908.98px;font-size:16.5px;color:#000;left:36.77px;">b6d4f5eecb4d482782d313f98ffe5f4b (Удалена)</div>
<div class="t" style="top:908.98px;font-size:16.5px;color:#000;left:676.14px;">0</div>
<div class="t" style="top:908.98px;font-size:16.5px;color:#000;left:773.24px;">0</div>
<div class="t" style="top:908.98px;font-size:16.5px;color:#000;left:853.24px;">0</div>
<div class="t" style="top:908.98px;font-size:16.5px;color:#000;left:909.60px;">0,01</div>
<div class="t" style="top:932.98px;font-size:16.5px;color:#000;left:36.79px;transform:scaleX(0.9875);transform-origin:left;">c5be8b048bfb4e21a57361383807020b (Удалена)</div>
<div class="t" style="top:932.98px;font-size:16.5px;color:#000;left:676.14px;">0</div>
<div class="t" style="top:932.98px;font-size:16.5px;color:#000;left:773.24px;">0</div>
<div class="t" style="top:932.98px;font-size:16.5px;color:#000;left:853.24px;">0</div>
<div class="t" style="top:932.98px;font-size:16.5px;color:#000;left:909.60px;">0,96</div>
<div class="t" style="top:956.98px;font-size:16.5px;color:#000;left:36.79px;transform:scaleX(0.9870);transform-origin:left;">e9446f2aca75482c832b3455b3213396 (Удалена)</div>
<div class="t" style="top:956.98px;font-size:16.5px;color:#000;left:676.14px;">0</div>
<div class="t" style="top:956.98px;font-size:16.5px;color:#000;left:773.24px;">0</div>
<div class="t" style="top:956.98px;font-size:16.5px;color:#000;left:853.24px;">0</div>
<div class="t" style="top:956.98px;font-size:16.5px;color:#000;left:909.60px;">0,01</div>
<div class="t" style="top:980.98px;font-size:16.5px;color:#000;left:36.79px;transform:scaleX(0.9872);transform-origin:left;">ea224eeb4b4744da8087f35eae9a773d (Удалена)</div>
<div class="t" style="top:980.98px;font-size:16.5px;color:#000;left:676.14px;">1</div>
<div class="t" style="top:980.98px;font-size:16.5px;color:#000;left:745.71px;">1024</div>
<div class="t" style="top:980.98px;font-size:16.5px;color:#000;left:844.07px;">20</div>
<div class="t" style="top:980.98px;font-size:16.5px;color:#000;left:909.60px;">3,16</div>
<div class="t" style="top:1004.98px;font-size:16.5px;color:#000;left:36.78px;">eae10eb9b6f84fb68134f34d9a6952e5 (Удалена)</div>
<div class="t" style="top:1004.98px;font-size:16.5px;color:#000;left:676.14px;">0</div>
<div class="t" style="top:1004.98px;font-size:16.5px;color:#000;left:773.24px;">0</div>
<div class="t" style="top:1004.98px;font-size:16.5px;color:#000;left:853.24px;">0</div>
<div class="t" style="top:1004.98px;font-size:16.5px;color:#000;left:909.60px;">0,04</div>
</div></body></html>
